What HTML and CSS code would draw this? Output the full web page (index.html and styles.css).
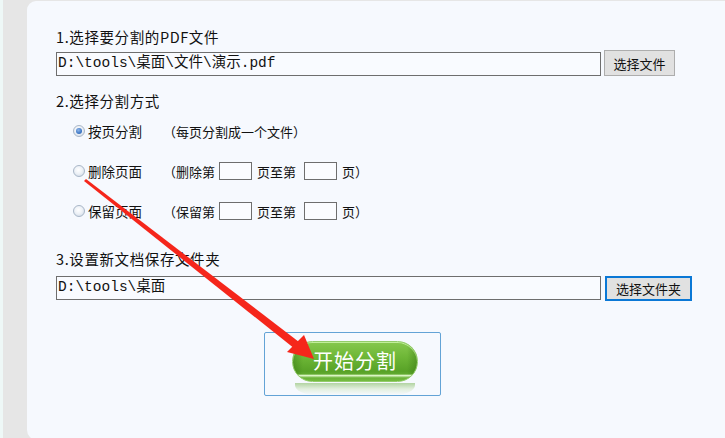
FILE: index.html
```html
<!DOCTYPE html>
<html lang="zh">
<head>
<meta charset="utf-8">
<title>PDF分割</title>
<link rel="stylesheet" href="styles.css">
</head>
<body>
<div class="panel">
  <div class="label">1.选择要分割的PDF文件</div>
  <div class="file-row">
    <div class="field">D:\tools\桌面\文件\演示.pdf</div>
    <button class="btn">选择文件</button>
  </div>

  <div class="label label-mode">2.选择分割方式</div>
  <div class="options">
    <div class="opt">
      <span class="radio checked"></span><span class="opt-name">按页分割</span><span>（每页分割成一个文件）</span>
    </div>
    <div class="opt">
      <span class="radio"></span><span class="opt-name">删除页面</span><span>（删除第</span><span class="page-box"></span><span class="mid">页至第</span><span class="page-box"></span><span>页）</span>
    </div>
    <div class="opt">
      <span class="radio"></span><span class="opt-name">保留页面</span><span>（保留第</span><span class="page-box"></span><span class="mid">页至第</span><span class="page-box"></span><span>页）</span>
    </div>
  </div>

  <div class="label label-folder">3.设置新文档保存文件夹</div>
  <div class="file-row file-row-folder">
    <div class="field">D:\tools\桌面</div>
    <button class="btn btn-focus">选择文件夹</button>
  </div>

  <div class="start-box">
    <div class="start-btn">开始分割</div>
    <div class="start-reflect"></div>
  </div>
</div>

<svg class="arrow" width="725" height="438" viewBox="0 0 725 438">
  <polygon points="84,181 86,179 299,342 295,349" fill="#f5261b"/>
  <polygon points="314,359 287,352 304,335" fill="#f5261b"/>
</svg>
</body>
</html>
```

FILE: styles.css
```css
html, body {
  margin: 0;
  padding: 0;
  overflow: hidden;
}

body {
  width: 725px;
  height: 438px;
  box-sizing: border-box;
  background: #e6e6e6;
  border-left: 3px solid #eef8f7;
  padding-left: 24px;
  padding-top: 1px;
  font-family: "Noto Sans CJK SC", "Liberation Sans", sans-serif;
  font-size: 13px;
  color: #111;
  position: relative;
}

.panel {
  height: 439px;
  background: #f6f9fe;
  border-radius: 9px 0 0 10px;
  box-sizing: border-box;
  padding: 27px 0 0 29px;
}

.label {
  height: 18px;
  line-height: 18px;
  font-size: 14.5px;
  letter-spacing: 0.6px;
}

.file-row {
  display: flex;
  align-items: flex-end;
  gap: 3px;
  margin-top: 4px;
  height: 26px;
}

.field {
  width: 545px;
  height: 24px;
  box-sizing: border-box;
  border: 1px solid #6e6e6e;
  background: #f9fbff;
  font-family: "Liberation Mono", "Noto Sans CJK SC", monospace;
  font-size: 14.5px;
  line-height: 21px;
  padding-left: 1px;
  white-space: nowrap;
}

.btn {
  width: 71px;
  height: 26px;
  box-sizing: border-box;
  border: 1px solid #adadad;
  background: #e1e1e1;
  font-family: "Noto Sans CJK SC", sans-serif;
  font-size: 13px;
  color: #111;
  padding: 0;
  margin: 0;
}

.label-mode {
  margin-top: 16px;
}

.options {
  margin-top: 11px;
  display: flex;
  flex-direction: column;
  gap: 20px;
}

.opt {
  height: 20px;
  display: flex;
  align-items: center;
  padding-left: 17px;
  white-space: nowrap;
}

.radio {
  width: 12px;
  height: 12px;
  box-sizing: border-box;
  border-radius: 50%;
  border: 1px solid #a9b7c8;
  background: radial-gradient(circle at 45% 40%, #ffffff 0%, #eef2f7 45%, #c9d5e3 100%);
  margin-right: 3px;
  position: relative;
}

.radio.checked::after {
  content: "";
  position: absolute;
  left: 2px;
  top: 2px;
  width: 6px;
  height: 6px;
  border-radius: 50%;
  background: radial-gradient(circle at 40% 35%, #8fb6e8 0%, #3f78c6 60%, #2b5ea8 100%);
}

.opt-name {
  width: 75px;
  font-size: 13.5px;
}

.page-box {
  width: 33px;
  height: 18px;
  box-sizing: border-box;
  border: 1px solid #6e6e6e;
  background: #fbfcff;
  margin: 0 5px 0 4px;
}

.mid {
  width: 43px;
}

.label-folder {
  margin-top: 29px;
}

.file-row-folder {
  margin-top: 8px;
  align-items: flex-start;
  gap: 4px;
  height: 25px;
}

.btn-focus {
  width: 87px;
  height: 25px;
  border: 2px solid #0a78d6;
}

.start-box {
  margin-top: 31px;
  margin-left: 208px;
  width: 177px;
  height: 64px;
  box-sizing: border-box;
  border: 1px solid #63a3d6;
  border-radius: 2px;
  padding: 8px 0 0 27px;
}

.start-btn {
  width: 126px;
  height: 41px;
  box-sizing: border-box;
  border-radius: 21px;
  border: 1px solid #93cc6a;
  background:
    linear-gradient(180deg, rgba(255,255,255,0) 82%, rgba(235,255,215,0.9) 86%, rgba(255,255,255,0) 92%),
    linear-gradient(90deg, rgba(40,100,10,0.35) 0%, rgba(0,0,0,0) 8%, rgba(0,0,0,0) 92%, rgba(40,100,10,0.35) 100%),
    linear-gradient(180deg, #86c84e 0%, #6db636 40%, #58a227 75%, #74bb40 100%);
  box-shadow: inset 0 1px 0 rgba(220,255,190,0.7);
  color: #fff;
  font-size: 20px;
  line-height: 38px;
  text-align: center;
  letter-spacing: 1px;
}

.start-reflect {
  width: 120px;
  height: 12px;
  margin: 1px 0 0 3px;
  border-radius: 0 0 20px 20px / 0 0 10px 10px;
  background: linear-gradient(180deg, rgba(110,175,70,0.5) 0%, rgba(180,215,150,0.3) 50%, rgba(246,249,254,0) 100%);
}

.arrow {
  position: absolute;
  left: -3px;
  top: 0;
  pointer-events: none;
}
```
